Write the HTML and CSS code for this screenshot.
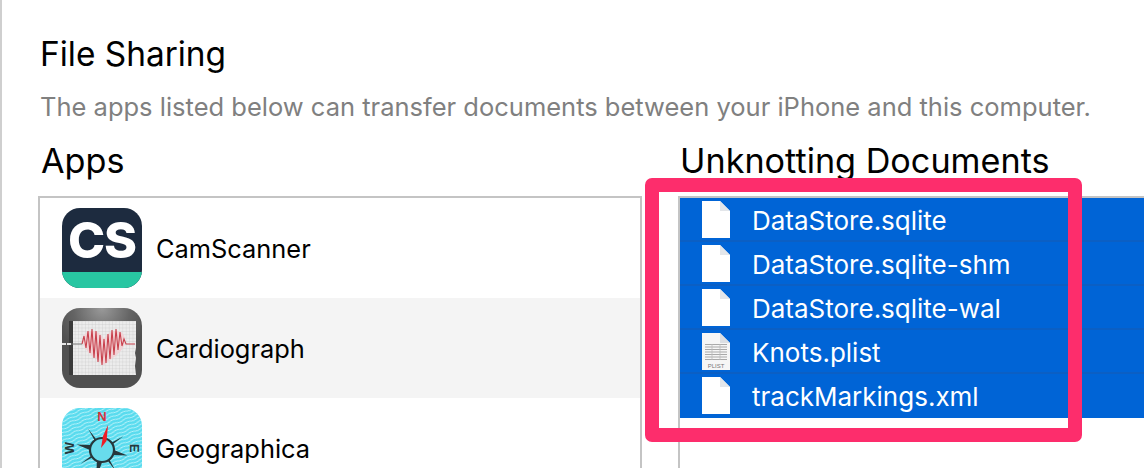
FILE: index.html
```html
<!DOCTYPE html>
<html lang="en">
<head>
<meta charset="utf-8">
<title>File Sharing</title>
<link rel="stylesheet" href="styles.css">
</head>
<body>
<main class="page">
  <h1 class="title">File Sharing</h1>
  <p class="subtitle">The apps listed below can transfer documents between your iPhone and this computer.</p>
  <div class="columns">
    <section class="apps">
      <h2 class="heading">Apps</h2>
      <ul class="app-list">
        <li class="app-row">
          <svg class="app-icon" viewBox="0 0 80 80">
            <defs><clipPath id="squircle"><rect width="80" height="80" rx="18"/></clipPath></defs>
            <g clip-path="url(#squircle)">
              <rect width="80" height="80" fill="#1d2b3f"/>
              <rect y="64" width="80" height="16" fill="#28c6a2"/>
              <text x="40" y="50" class="cs-text">CS</text>
            </g>
          </svg>
          <span class="app-name">CamScanner</span>
        </li>
        <li class="app-row app-row-alt">
          <svg class="app-icon" viewBox="0 0 80 80">
            <defs>
              <radialGradient id="bezel" cx="0.5" cy="0" r="0.6"><stop offset="0" stop-color="#9a9a9a"/><stop offset="0.6" stop-color="#646464"/><stop offset="1" stop-color="#505050"/></radialGradient>
              <pattern id="grid" width="3.4" height="3.4" patternUnits="userSpaceOnUse"><rect width="3.4" height="3.4" fill="#ececec"/><path d="M3.4 0V3.4M0 3.4H3.4" stroke="#c4c4c4" stroke-width="0.6"/></pattern>
            </defs>
            <rect width="80" height="80" rx="18" fill="url(#bezel)"/>
            <path d="M7 13H74V40L73 45L74 50L73 58L74 67H7Z" fill="url(#grid)"/>
            <rect x="7" y="13" width="4" height="54" fill="#3a3a3a"/>
            <path d="M0 36H9" stroke="#e5e5e5" stroke-width="2" stroke-dasharray="4 1"/>
            <path d="M9 36H20" stroke="#777" stroke-width="1"/>
            <path d="M42 31C36 19 20 20 21 34C22 44 34 50 42 57C50 50 62 44 63 34C64 20 48 19 42 31Z" fill="#f1d3d6"/>
            <path d="M20 36L22 28L24 40L26 23L28 45L30 21L32 50L34 23L36 54L38 27L40 57L42 31L44 55L46 26L48 51L50 22L52 47L54 21L56 42L58 24L60 38L62 31L64 36H73" fill="none" stroke="#c8414d" stroke-width="1.1"/>
          </svg>
          <span class="app-name">Cardiograph</span>
        </li>
        <li class="app-row">
          <svg class="app-icon" viewBox="0 0 80 80">
            <defs>
              <clipPath id="squircle3"><rect width="80" height="80" rx="18"/></clipPath>
              <pattern id="contour" width="13" height="3.6" patternUnits="userSpaceOnUse" patternTransform="rotate(-22)"><path d="M0 1.800Q3.250 0.300 6.500 1.800T13 1.800" fill="none" stroke="#c4f4fa" stroke-width="0.9"/></pattern>
            </defs>
            <g clip-path="url(#squircle3)">
              <rect width="80" height="80" fill="#58dbee"/>
              <rect width="80" height="80" fill="url(#contour)"/>
              <g transform="rotate(12 40 42)">
                <path d="M40 42L36 38L14 42L36 46ZM40 42L44 38L66 42L44 46ZM40 42L36 46L40 70L44 46Z" fill="#26383c"/>
                <path d="M40 42L36 36L22 24L34 38ZM40 42L44 36L58 24L46 38ZM40 42L36 48L22 60L34 46ZM40 42L44 48L58 60L46 46Z" fill="#26383c"/>
              </g>
              <circle cx="40" cy="42" r="12" fill="#68dcec" stroke="#26383c" stroke-width="2.2"/>
              <path d="M46 17L44.500 33L39 40L41 28Z" fill="#ee1c25"/>
              <text x="40" y="13" class="compass compass-n">N</text>
              <text x="8" y="44" class="compass compass-w" transform="rotate(-90 8 40)">W</text>
              <text x="72" y="44" class="compass compass-e" transform="rotate(90 72 40)">E</text>
            </g>
          </svg>
          <span class="app-name">Geographica</span>
        </li>
      </ul>
    </section>
    <section class="docs">
      <h2 class="heading">Unknotting Documents</h2>
      <ul class="doc-list">
        <li class="doc-row">
          <svg class="doc-icon" viewBox="0 0 28 37"><path d="M0 0H18L28 10V37H0Z" fill="#fff"/><path d="M18 0V10H28Z" fill="#e3e6ea"/></svg>
          <span class="doc-name">DataStore.sqlite</span>
        </li>
        <li class="doc-row">
          <svg class="doc-icon" viewBox="0 0 28 37"><path d="M0 0H18L28 10V37H0Z" fill="#fff"/><path d="M18 0V10H28Z" fill="#e3e6ea"/></svg>
          <span class="doc-name">DataStore.sqlite-shm</span>
        </li>
        <li class="doc-row">
          <svg class="doc-icon" viewBox="0 0 28 37"><path d="M0 0H18L28 10V37H0Z" fill="#fff"/><path d="M18 0V10H28Z" fill="#e3e6ea"/></svg>
          <span class="doc-name">DataStore.sqlite-wal</span>
        </li>
        <li class="doc-row">
          <svg class="doc-icon" viewBox="0 0 28 37">
            <path d="M0 0H18L28 10V37H0Z" fill="#f6f6f6"/><path d="M18 0V10H28Z" fill="#dcdfe3"/>
            <path d="M3 11.500H25M3 14H25M3 16.500H25M3 19H25M3 21.500H25M3 24H25M3 26.500H25" stroke="#a9a9a9" stroke-width="1"/>
            <path d="M10 11V27M18 11V27" stroke="#bbb" stroke-width="0.8"/>
            <text x="14" y="35" class="plist-label">PLIST</text>
          </svg>
          <span class="doc-name">Knots.plist</span>
        </li>
        <li class="doc-row">
          <svg class="doc-icon" viewBox="0 0 28 37"><path d="M0 0H18L28 10V37H0Z" fill="#fff"/><path d="M18 0V10H28Z" fill="#e3e6ea"/></svg>
          <span class="doc-name">trackMarkings.xml</span>
        </li>
      </ul>
    </section>
  </div>
</main>
<div class="highlight"></div>
</body>
</html>
```
FILE: styles.css
```css
* {
  box-sizing: border-box;
}

html,
body {
  margin: 0;
  height: 468px;
  overflow: hidden;
  background: #fff;
}

body {
  position: relative;
  font-family: Inter, "Liberation Sans", sans-serif;
  color: #000;
}

.page {
  height: 468px;
  padding: 34px 0 0 36px;
  border-left: 2px solid #cfcfcf;
}

.title {
  margin: 0 0 0 2px;
  font-size: 33.4px;
  font-weight: 400;
  line-height: 40px;
}

.subtitle {
  margin: 18px 0 0 2px;
  font-size: 25.5px;
  font-weight: 400;
  line-height: 30px;
  color: #808080;
  white-space: nowrap;
}

.columns {
  display: grid;
  grid-template-columns: 604px 1fr;
  column-gap: 36px;
  margin-top: 19px;
}

.heading {
  margin: 0 0 0 3px;
  font-size: 34.2px;
  font-weight: 400;
  line-height: 40px;
  white-space: nowrap;
}

.docs .heading {
  margin-left: 2px;
}

.app-list,
.doc-list {
  list-style: none;
  margin: 15px 0 0;
  padding: 0;
  height: 272px;
  overflow: hidden;
  border: 2px solid #c4c4c4;
  border-bottom: 0;
}

.doc-list {
  border-right: 0;
}

.app-row {
  display: flex;
  align-items: center;
  gap: 14px;
  height: 100px;
  padding-left: 22px;
}

.app-row-alt {
  background: #f4f4f4;
}

.app-icon {
  flex: none;
  width: 80px;
  height: 80px;
}

.app-name {
  padding-top: 2px;
  font-size: 25.4px;
  line-height: 30px;
}

.cs-text {
  font-family: Inter, sans-serif;
  font-size: 50px;
  font-weight: 800;
  letter-spacing: -1px;
  fill: #fff;
  text-anchor: middle;
}

.compass {
  font-family: "Liberation Sans", sans-serif;
  font-size: 13px;
  font-weight: 700;
  text-anchor: middle;
}

.compass-n {
  fill: #d7333c;
}

.compass-w,
.compass-e {
  fill: #26383c;
}

.doc-row {
  display: flex;
  align-items: center;
  height: 44px;
  padding-left: 22px;
  background: #0064d6;
  border-bottom: 2px solid #0b5fc4;
}

.doc-row:last-child {
  border-bottom-color: #0064d6;
}

.doc-icon {
  flex: none;
  width: 28px;
  height: 37px;
}

.doc-name {
  margin-left: 22px;
  padding-top: 4px;
  font-size: 26px;
  line-height: 30px;
  color: #fff;
  white-space: nowrap;
}

.plist-label {
  font-family: "Liberation Sans", sans-serif;
  font-size: 6px;
  fill: #777;
  text-anchor: middle;
}

.highlight {
  position: absolute;
  left: 645px;
  top: 178px;
  width: 437px;
  height: 264px;
  border: 14px solid #fd2d6c;
  border-radius: 7px;
}
```
